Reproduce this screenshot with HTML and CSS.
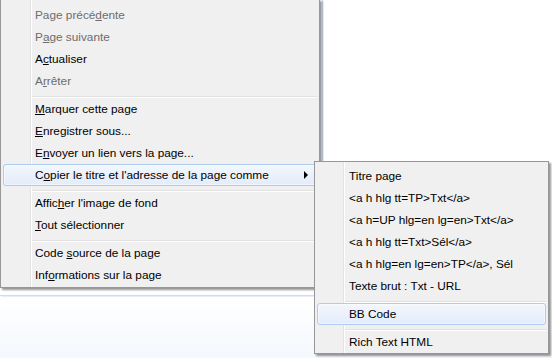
FILE: index.html
```html
<!DOCTYPE html>
<html>
<head>
<meta charset="utf-8">
<link rel="stylesheet" href="styles.css">
</head>
<body>
<div class="frame"></div>
<div class="menu main">
  <div class="item off"><span class="label">Page précé<u>d</u>ente</span></div>
  <div class="item off"><span class="label">P<u>a</u>ge suivante</span></div>
  <div class="item"><span class="label">A<u>c</u>tualiser</span></div>
  <div class="item off"><span class="label">A<u>r</u>rêter</span></div>
  <div class="sep"></div>
  <div class="item"><span class="label"><u>M</u>arquer cette page</span></div>
  <div class="item"><span class="label"><u>E</u>nregistrer sous...</span></div>
  <div class="item"><span class="label">E<u>n</u>voyer un lien vers la page...</span></div>
  <div class="item hot"><span class="label">C<u>o</u>pier le titre et l'adresse de la page comme</span><span class="arrow"></span></div>
  <div class="sep"></div>
  <div class="item"><span class="label">Affic<u>h</u>er l'image de fond</span></div>
  <div class="item"><span class="label"><u>T</u>out sélectionner</span></div>
  <div class="sep"></div>
  <div class="item"><span class="label">Code <u>s</u>ource de la page</span></div>
  <div class="item"><span class="label">Inf<u>o</u>rmations sur la page</span></div>
</div>
<div class="menu sub">
  <div class="item"><span class="label">Titre page</span></div>
  <div class="item"><span class="label">&lt;a h hlg tt=TP&gt;Txt&lt;/a&gt;</span></div>
  <div class="item"><span class="label">&lt;a h=UP hlg=en lg=en&gt;Txt&lt;/a&gt;</span></div>
  <div class="item"><span class="label">&lt;a h hlg tt=Txt&gt;Sél&lt;/a&gt;</span></div>
  <div class="item"><span class="label">&lt;a h hlg=en lg=en&gt;TP&lt;/a&gt;, Sél</span></div>
  <div class="item"><span class="label">Texte brut : Txt - URL</span></div>
  <div class="sep"></div>
  <div class="item hot"><span class="label">BB Code</span></div>
  <div class="sep"></div>
  <div class="item"><span class="label">Rich Text HTML</span></div>
</div>
</body>
</html>
```

FILE: styles.css
```css
* {
  box-sizing: border-box;
}

html,
body {
  margin: 0;
}

body {
  position: relative;
  width: 552px;
  height: 358px;
  overflow: hidden;
  background: linear-gradient(to bottom, #ffffff 0, #ffffff 298px, #f4f7fd 358px);
  font-family: "Liberation Sans", Arial, sans-serif;
  font-size: 11.8px;
  color: #000;
}

.frame {
  width: 323px;
  height: 296px;
  border-right: 1px solid #cbdcf3;
  border-bottom: 1px solid #cbdcf3;
  box-shadow: 1px 1px 0 #e6eefa;
}

.menu {
  position: absolute;
  background: #f0f0f0;
  border: 1px solid #979797;
  box-shadow: 2px 2px 2px rgba(0, 0, 0, 0.42);
}

.menu::before {
  content: "";
  position: absolute;
  top: 0;
  bottom: 0;
  width: 2px;
  background: linear-gradient(to right, #e2e3e3 1px, #ffffff 1px);
}

.main {
  left: 0;
  top: -1px;
  width: 320px;
  padding: 4px 2px 1px 2px;
}

.main::before {
  left: 29px;
}

.sub {
  left: 314px;
  top: 161px;
  width: 235px;
  padding: 3px 2px 0 2px;
}

.sub::before {
  left: 28px;
}

.item {
  position: relative;
  display: flex;
  align-items: center;
  height: 22px;
  padding-left: 31px;
  border: 1px solid transparent;
  border-radius: 3px;
  white-space: nowrap;
}

.item u {
  text-decoration: underline;
  text-underline-offset: 1px;
}

.off {
  color: #6d6d6d;
}

.hot {
  border-color: #aecbf0;
  background: linear-gradient(to bottom, #f3f7fd, #e3ecfa);
  box-shadow: inset 0 0 0 1px rgba(255, 255, 255, 0.45);
}

.label {
  flex: 1;
}

.arrow {
  width: 0;
  height: 0;
  margin-right: 8px;
  border-left: 4px solid #000;
  border-top: 4px solid transparent;
  border-bottom: 4px solid transparent;
}

.sep {
  height: 2px;
  margin-top: 4px;
  border-top: 1px solid #e0e0e0;
  border-bottom: 1px solid #ffffff;
}

.main .sep {
  margin-left: 27px;
}

.sub .sep {
  margin-left: 26px;
}
```
